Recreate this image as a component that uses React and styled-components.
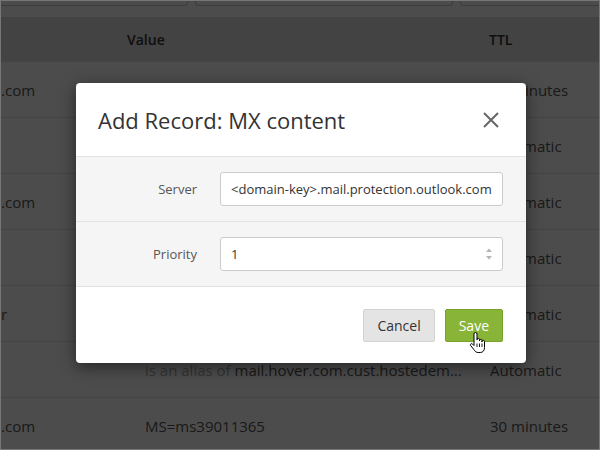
import React from 'react'
import styled, { createGlobalStyle } from 'styled-components'

const GlobalStyle = createGlobalStyle`
body {
    margin: 0;
    font-family: "Open Sans", "DejaVu Sans", sans-serif;
}
`

const Frame = styled.div`
position: relative;
width: 600px;
height: 450px;
box-sizing: border-box;
border: 1px solid #777;
overflow: hidden;
background: #fff;
`

const FilterBar = styled.div`
display: grid;
grid-template-columns: 200px 258px 200px;
gap: 7px;
margin-left: -13px;
padding-bottom: 11px;
`

const FilterInput = styled.div`
height: 4px;
border: 1px solid #c8c8c8;
border-top: none;
border-radius: 0 0 4px 4px;
`

const TableHead = styled.div`
display: grid;
grid-template-columns: 126px 362px 1fr;
align-items: center;
height: 45px;
background: #e1e1e1;
font-size: 14px;
font-weight: 600;
color: #333;
`

const Row = styled.div`
display: grid;
grid-template-columns: 144px 345px 1fr;
align-items: center;
height: 56px;
box-sizing: border-box;
border-bottom: 1px solid #e5e5e5;
font-size: 15px;
color: #555;
`

const Cell = styled.div`
white-space: nowrap;
overflow: hidden;
text-overflow: ellipsis;
padding-right: ${p => p.$pad || 0}px;
`

const Muted = styled.span`
color: #aaa;
`

const Overlay = styled.div`
position: absolute;
inset: 0;
background: rgba(0, 0, 0, 0.7);
display: flex;
justify-content: center;
align-items: flex-start;
padding: 82px 0 0 2px;
`

const Modal = styled.div`
width: 450px;
background: #fff;
border-radius: 4px;
box-shadow: 0 4px 16px rgba(0, 0, 0, 0.5);
overflow: hidden;
`

const ModalHeader = styled.div`
display: flex;
align-items: center;
justify-content: space-between;
height: 73px;
padding: 0 27px 0 22px;
border-bottom: 1px solid #e2e2e2;
`

const Title = styled.h2`
margin: 0;
font-size: 22px;
font-weight: 400;
color: #333;
`

const CloseButton = styled.button`
display: flex;
width: 16px;
height: 16px;
padding: 0;
border: none;
background: none;
cursor: pointer;
`

const FormBody = styled.div`
background: #f5f5f5;
`

const FieldRow = styled.div`
display: grid;
grid-template-columns: 121px 1fr;
column-gap: 23px;
align-items: center;
padding: 15px 23px 15px 0;
border-bottom: 1px solid #e2e2e2;
`

const Label = styled.label`
text-align: right;
font-size: 13px;
color: #555;
`

const FieldBox = styled.div`
display: flex;
align-items: center;
height: 34px;
box-sizing: border-box;
border: 1px solid #ccc;
border-radius: 3px;
background: #fff;
padding: 0 9px 0 10px;

input {
    flex: 1;
    min-width: 0;
    border: none;
    outline: none;
    padding: 0;
    font-family: "Open Sans", sans-serif;
    font-size: 13px;
    color: #333;
    background: transparent;
}
`

const Footer = styled.div`
display: flex;
justify-content: flex-end;
gap: 10px;
padding: 22px 23px 21px;
`

const Button = styled.button`
position: relative;
height: 33px;
padding: 0 13px;
border-radius: 2px;
font-family: "Open Sans", sans-serif;
font-size: 14px;
cursor: pointer;
border: 1px solid ${p => p.$primary ? '#79a12c' : '#d2d2d2'};
background: ${p => p.$primary ? '#88b437' : '#e4e4e4'};
color: ${p => p.$primary ? '#fff' : '#333'};
`

const Pointer = styled.svg`
position: absolute;
left: 23px;
top: 21px;
`

const rows = [
    { name: '.com', value: 'mail.hover.com', ttl: '30 minutes' },
    { name: '', value: 'mx.hover.com.cust.hostedemail.com', ttl: 'Automatic' },
    { name: '.com', value: '216.40.47.17', ttl: 'Automatic' },
    { name: '', value: '216.40.47.17', ttl: 'Automatic' },
    { name: 'r', value: 'v=spf1 include:_spf.hostedemail.com ~all', ttl: 'Automatic' },
    { name: '', alias: 'mail.hover.com.cust.hostedemail.com', ttl: 'Automatic' },
    { name: '.com', value: 'MS=ms39011365', ttl: '30 minutes' },
]

function App() {
    return (
        <Frame>
            <GlobalStyle />
            <FilterBar>
                <FilterInput />
                <FilterInput />
                <FilterInput />
            </FilterBar>
            <TableHead>
                <div></div>
                <div>Value</div>
                <div>TTL</div>
            </TableHead>
            {rows.map((r, i) => (
                <Row key={i}>
                    <Cell>{r.name}</Cell>
                    <Cell $pad={27}>
                        {r.alias ? <><Muted>is an alias of </Muted>{r.alias}</> : r.value}
                    </Cell>
                    <Cell>{r.ttl}</Cell>
                </Row>
            ))}
            <Overlay>
                <Modal>
                    <ModalHeader>
                        <Title>Add Record: MX content</Title>
                        <CloseButton aria-label="Close">
                            <svg width="16" height="16" viewBox="0 0 16 16">
                                <path d="M1 1L15 15M15 1L1 15" stroke="#666" strokeWidth="2" />
                            </svg>
                        </CloseButton>
                    </ModalHeader>
                    <FormBody>
                        <FieldRow>
                            <Label>Server</Label>
                            <FieldBox>
                                <input readOnly value="<domain-key>.mail.protection.outlook.com" />
                            </FieldBox>
                        </FieldRow>
                        <FieldRow>
                            <Label>Priority</Label>
                            <FieldBox>
                                <input readOnly value="1" />
                                <svg width="8" height="14" viewBox="0 0 8 14">
                                    <path d="M1 5L4 1.5L7 5Z" fill="#b5b5b5" />
                                    <path d="M1 9L4 12.5L7 9Z" fill="#b5b5b5" />
                                </svg>
                            </FieldBox>
                        </FieldRow>
                    </FormBody>
                    <Footer>
                        <Button>Cancel</Button>
                        <Button $primary>
                            Save
                            <Pointer width="18" height="23" viewBox="0 0 18 23">
                                <path
                                    d="M5 11V3a1.5 1.5 0 0 1 3 0v6V8.6a1.25 1.25 0 0 1 2.5 0V10V9.6a1.25 1.25 0 0 1 2.5 0V11v-0.4a1.25 1.25 0 0 1 2.5 0V16.5c0 3 -1.6 5 -4.2 5H9.2c-2 0 -3 -1 -4.4 -3L1.7 14.6a1.2 1.2 0 0 1 1.9 -1.5L5 14.6Z"
                                    fill="#fff"
                                    stroke="#000"
                                    strokeWidth="1"
                                    strokeLinejoin="round"
                                />
                                <path d="M8 12.5v3.5M10.5 12.5v3.5M13 12.5v3.5" stroke="#000" strokeWidth="0.9" />
                            </Pointer>
                        </Button>
                    </Footer>
                </Modal>
            </Overlay>
        </Frame>
    )
}

export default App
